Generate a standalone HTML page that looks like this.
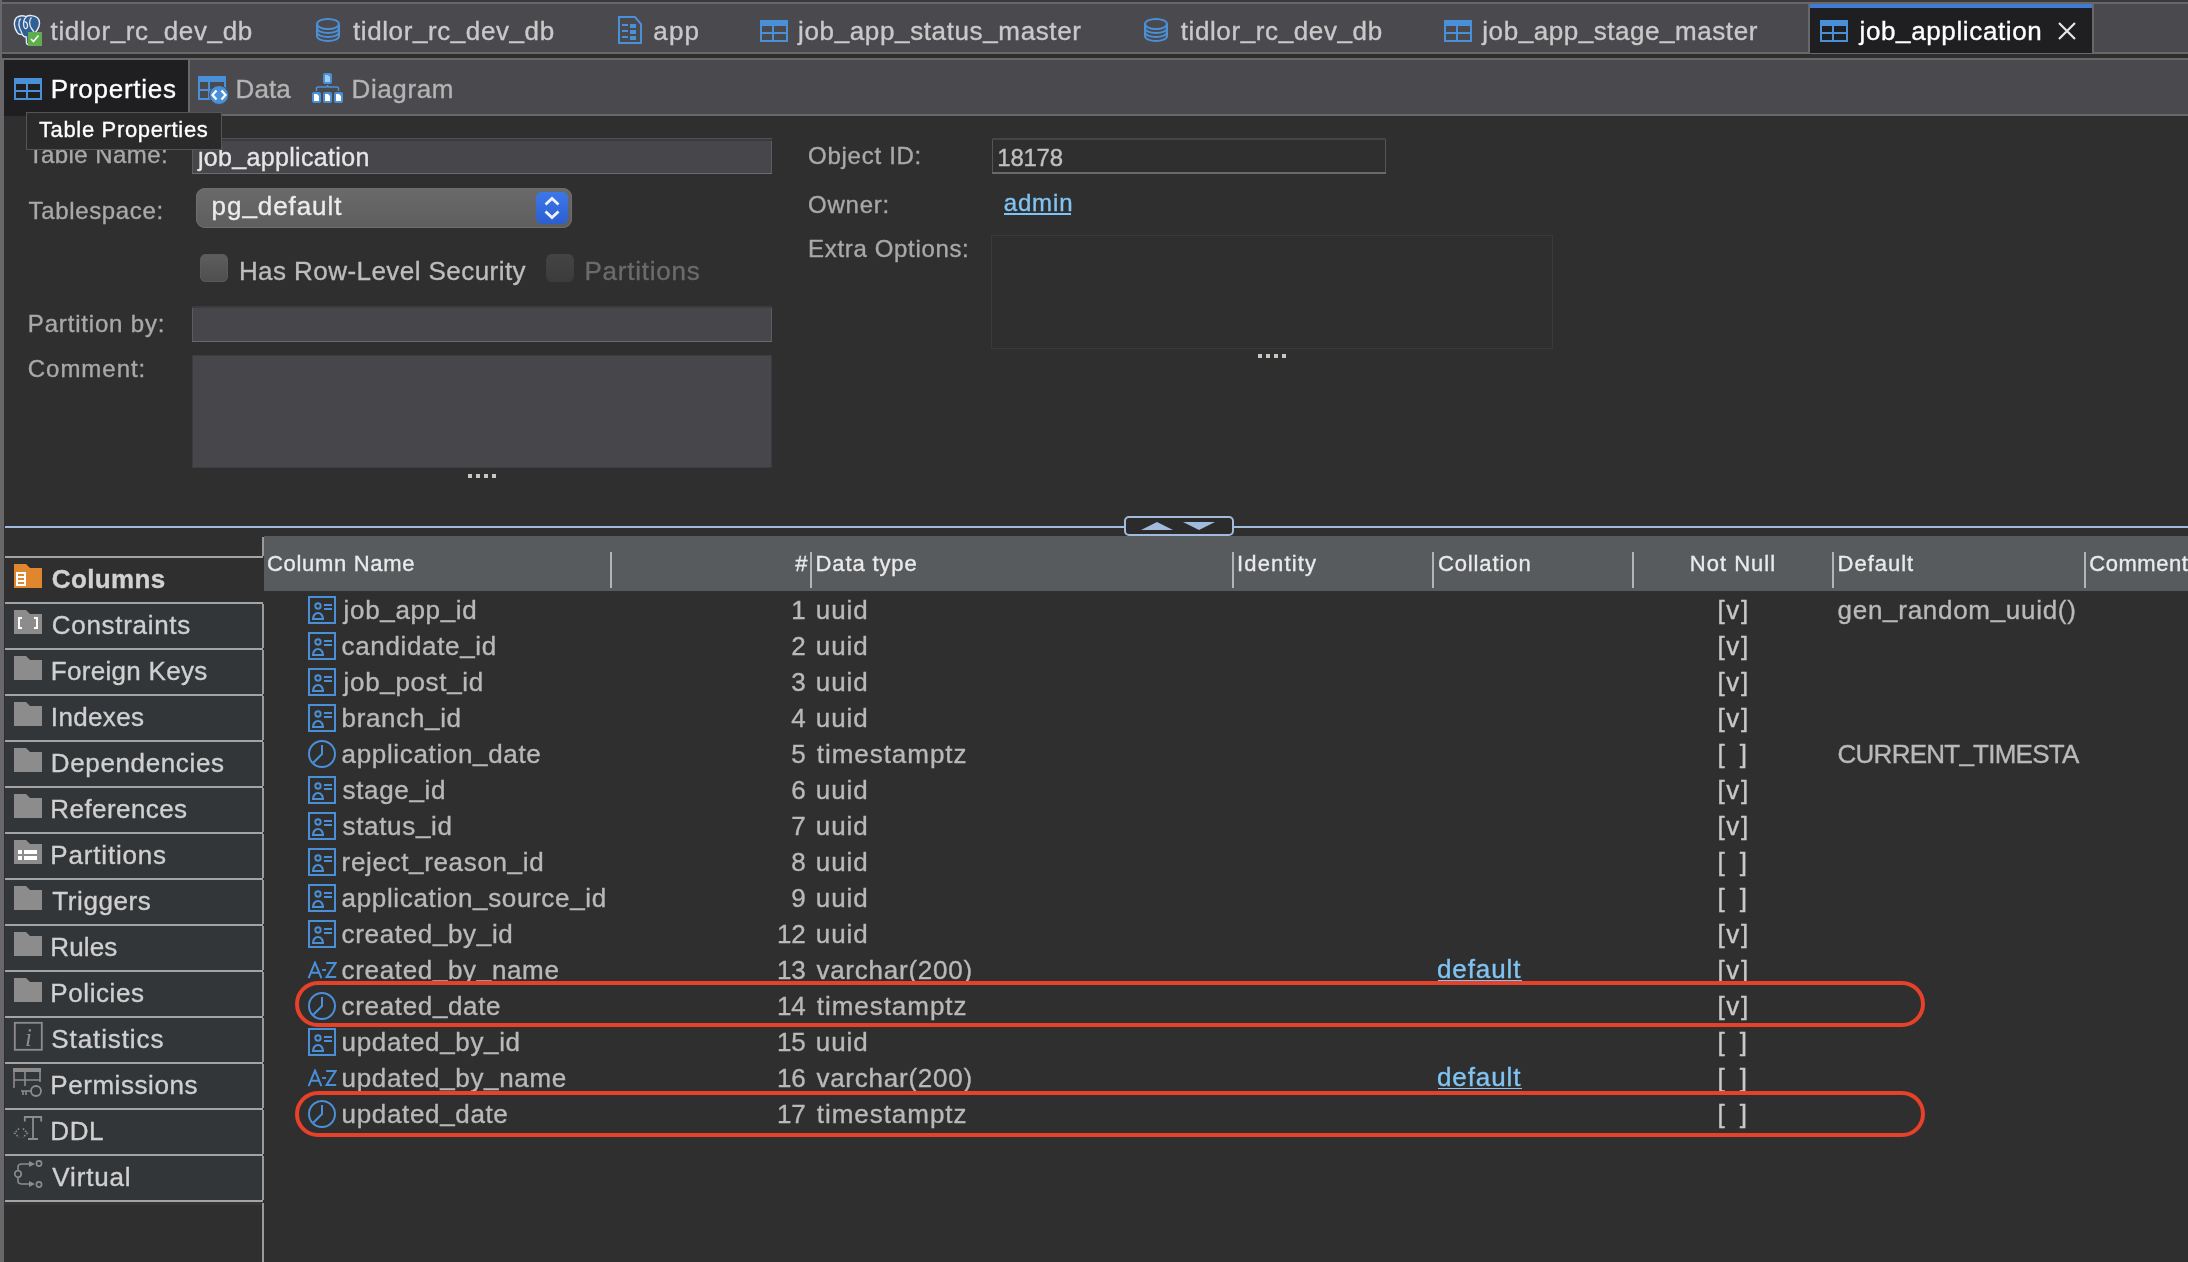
<!DOCTYPE html>
<html><head><meta charset="utf-8"><style>
html,body{margin:0;padding:0;}
body{width:2188px;height:1262px;overflow:hidden;position:relative;background:#2f2f2f;font-family:"Liberation Sans", sans-serif;}
#root{position:absolute;left:0;top:0;width:2188px;height:1262px;will-change:transform;}
#root div{-webkit-text-stroke:0.35px currentColor;}
</style></head><body>
<div id="root"><div style="position:absolute;left:0;top:0;width:2188px;height:2px;background:#3a3a3c"></div>
<div style="position:absolute;left:0px;top:2px;width:2188px;height:2px;background:#68686a"></div>
<div style="position:absolute;left:0px;top:4px;width:2188px;height:48px;background:#4a494d"></div>
<div style="position:absolute;left:0px;top:52px;width:2188px;height:2px;background:#68686a"></div>
<div style="position:absolute;left:0px;top:54px;width:2188px;height:4px;background:#2e2e2e"></div>
<div style="position:absolute;left:0px;top:58px;width:2188px;height:2px;background:#68686a"></div>
<div style="position:absolute;left:0px;top:60px;width:2188px;height:54px;background:#4a494d"></div>
<div style="position:absolute;left:0px;top:114px;width:2188px;height:2px;background:#68686a"></div>
<div style="position:absolute;left:0px;top:0px;width:2px;height:116px;background:#68686a"></div>
<div style="position:absolute;left:0px;top:116px;width:4px;height:1146px;background:#68686a"></div>
<div style="position:absolute;left:0px;top:60px;width:4px;height:56px;background:#68686a"></div>
<svg style="position:absolute;left:12px;top:14px" width="32" height="32" viewBox="0 0 32 32">
<path d="M4.5 3.5C8 1.2 11.5 1.6 14 2.6C17 1 22.5 1.2 25.5 3.8C28.5 6.8 27.8 12 25.5 15.5L23 19L18 24L17.5 29C16.8 31 15 31 14.5 29L14.2 23C12.5 23 10.8 22 10 20C8 21 6 20 5 18C2 13.5 1.2 7 4.5 3.5Z" fill="#2f5f93" stroke="#e8e8f0" stroke-width="1.4"/>
<path d="M8.5 4.5C6 8 7 14 10 19M14.5 3C11.5 4.5 11 9.5 12 13C13 15.5 15.5 15 15.5 12C15.5 9 14 7.5 12.5 8M19.5 3.5C17 5.5 17 11 19.5 14.5L22 18" fill="none" stroke="#e8e8f0" stroke-width="1.3"/>
<rect x="16" y="18" width="14" height="14" fill="#60ad50"/>
<path d="M19 25L21.5 27.5L26.5 21.5" fill="none" stroke="#f4fff0" stroke-width="1.6"/></svg>
<div style="position:absolute;top:17.99px;font-size:26px;line-height:26px;color:#c9c9c9;letter-spacing:0.6218359374999997px;font-weight:400;white-space:pre;left:50.60px;">tidlor<span style="position:relative;top:-2px">_</span>rc<span style="position:relative;top:-2px">_</span>dev<span style="position:relative;top:-2px">_</span>db</div>
<svg style="position:absolute;left:316px;top:18px" width="24" height="24" viewBox="0 0 24 24"><g fill="none" stroke="#4a90d9" stroke-width="2"><ellipse cx="12" cy="6" rx="11" ry="5"/><path d="M1 6V18C1 21 6 23 12 23S23 21 23 18V6"/><path d="M1 10C1 13 6 15 12 15S23 13 23 10"/><path d="M1 14C1 17 6 19 12 19S23 17 23 14"/></g></svg>
<div style="position:absolute;top:17.99px;font-size:26px;line-height:26px;color:#c9c9c9;letter-spacing:0.5885026041666682px;font-weight:400;white-space:pre;left:353.00px;">tidlor<span style="position:relative;top:-2px">_</span>rc<span style="position:relative;top:-2px">_</span>dev<span style="position:relative;top:-2px">_</span>db</div>
<svg style="position:absolute;left:618px;top:16px" width="24" height="28" viewBox="0 0 24 28"><path fill="none" stroke="#4a90d9" stroke-width="2" d="M1 1H17L23 8V27H1Z"/><g fill="#4a90d9"><rect x="4" y="8" width="6" height="2"/><rect x="4" y="14" width="6" height="2"/><rect x="4" y="20" width="6" height="2"/><rect x="12" y="8" width="6" height="4"/><rect x="12" y="14" width="6" height="4"/><rect x="12" y="20" width="6" height="4"/></g></svg>
<div style="position:absolute;top:17.99px;font-size:26px;line-height:26px;color:#c9c9c9;letter-spacing:1.190039062500034px;font-weight:400;white-space:pre;left:653.30px;">app</div>
<svg style="position:absolute;left:760px;top:20px" width="28" height="22" viewBox="0 0 28 22"><path fill="#4a90d9" d="M0 0H28V22H0Z M2 6V12H12V6Z M14 6V12H26V6Z M2 14V20H12V14Z M14 14V20H26V14Z" fill-rule="evenodd"/></svg>
<div style="position:absolute;top:17.99px;font-size:26px;line-height:26px;color:#c9c9c9;letter-spacing:0.6237500000000011px;font-weight:400;white-space:pre;left:798.10px;">job<span style="position:relative;top:-2px">_</span>app<span style="position:relative;top:-2px">_</span>status<span style="position:relative;top:-2px">_</span>master</div>
<svg style="position:absolute;left:1144px;top:18px" width="24" height="24" viewBox="0 0 24 24"><g fill="none" stroke="#4a90d9" stroke-width="2"><ellipse cx="12" cy="6" rx="11" ry="5"/><path d="M1 6V18C1 21 6 23 12 23S23 21 23 18V6"/><path d="M1 10C1 13 6 15 12 15S23 13 23 10"/><path d="M1 14C1 17 6 19 12 19S23 17 23 14"/></g></svg>
<div style="position:absolute;top:17.99px;font-size:26px;line-height:26px;color:#c9c9c9;letter-spacing:0.6085026041666576px;font-weight:400;white-space:pre;left:1180.70px;">tidlor<span style="position:relative;top:-2px">_</span>rc<span style="position:relative;top:-2px">_</span>dev<span style="position:relative;top:-2px">_</span>db</div>
<svg style="position:absolute;left:1444px;top:20px" width="28" height="22" viewBox="0 0 28 22"><path fill="#4a90d9" d="M0 0H28V22H0Z M2 6V12H12V6Z M14 6V12H26V6Z M2 14V20H12V14Z M14 14V20H26V14Z" fill-rule="evenodd"/></svg>
<div style="position:absolute;top:17.99px;font-size:26px;line-height:26px;color:#c9c9c9;letter-spacing:0.5494037828947345px;font-weight:400;white-space:pre;left:1482.30px;">job<span style="position:relative;top:-2px">_</span>app<span style="position:relative;top:-2px">_</span>stage<span style="position:relative;top:-2px">_</span>master</div>
<div style="position:absolute;left:1808px;top:4px;width:2px;height:49px;background:#68686a"></div>
<div style="position:absolute;left:2092px;top:4px;width:2px;height:49px;background:#68686a"></div>
<div style="position:absolute;left:1810px;top:4px;width:282px;height:4px;background:#3f7ad6"></div>
<div style="position:absolute;left:1810px;top:8px;width:282px;height:45px;background:#1f1f22"></div>
<svg style="position:absolute;left:1820px;top:20px" width="28" height="22" viewBox="0 0 28 22"><path fill="#4a90d9" d="M0 0H28V22H0Z M2 6V12H12V6Z M14 6V12H26V6Z M2 14V20H12V14Z M14 14V20H26V14Z" fill-rule="evenodd"/></svg>
<div style="position:absolute;top:17.99px;font-size:26px;line-height:26px;color:#ffffff;letter-spacing:0.6279436383928539px;font-weight:400;white-space:pre;left:1859.50px;">job<span style="position:relative;top:-2px">_</span>application</div>
<svg style="position:absolute;left:2058px;top:22px" width="18" height="18" viewBox="0 0 18 18"><path d="M1 1L17 17M17 1L1 17" stroke="#e8e8e8" stroke-width="2.2"/></svg>
<div style="position:absolute;left:4px;top:60px;width:184px;height:56px;background:#1f1f21"></div>
<div style="position:absolute;left:188px;top:60px;width:2px;height:54px;background:#68686a"></div>
<svg style="position:absolute;left:14px;top:78px" width="28" height="22" viewBox="0 0 28 22"><path fill="#4a90d9" d="M0 0H28V22H0Z M2 6V12H12V6Z M14 6V12H26V6Z M2 14V20H12V14Z M14 14V20H26V14Z" fill-rule="evenodd"/></svg>
<div style="position:absolute;top:75.99px;font-size:26px;line-height:26px;color:#ffffff;letter-spacing:0.7446614583333336px;font-weight:400;white-space:pre;left:50.80px;">Properties</div>
<svg style="position:absolute;left:198px;top:76px" width="32" height="32" viewBox="0 0 32 32"><path fill="#4a90d9" fill-rule="evenodd" d="M0 0H28V24H0Z M2 6V13H10V6Z M12 6V13H26V6Z M2 15V22H10V15Z M12 15V22H26V15Z"/><circle cx="21" cy="19" r="9.5" fill="#4a90d9" stroke="#4a494d" stroke-width="1"/><path d="M18.5 14.5L14.5 19L18.5 23.5M23.5 14.5L27.5 19L23.5 23.5" fill="none" stroke="#fff" stroke-width="2.2"/></svg>
<div style="position:absolute;top:75.99px;font-size:26px;line-height:26px;color:#b4b4b4;letter-spacing:0.08001302083333901px;font-weight:400;white-space:pre;left:235.60px;">Data</div>
<svg style="position:absolute;left:311px;top:72px" width="34" height="32" viewBox="0 0 34 32"><g fill="#4a90d9"><rect x="12" y="1" width="9" height="11" rx="2"/><rect x="1" y="20" width="9" height="11" rx="2"/><rect x="12" y="20" width="9" height="11" rx="2"/><rect x="23" y="20" width="9" height="11" rx="2"/></g><g fill="#9ecdf0"><path d="M14 3H17L19 5V10H14Z"/></g><g fill="#fff"><path d="M3 22H6L8 24V29H3Z"/><path d="M14 22H17L19 24V29H14Z"/><path d="M25 22H28L30 24V29H25Z"/></g><path d="M5.5 19V16Q5.5 15 7 15H15Q16.5 15 16.5 13Q16.5 15 18 15H26Q27.5 15 27.5 16V19" fill="none" stroke="#4a90d9" stroke-width="1.5"/></svg>
<div style="position:absolute;top:75.99px;font-size:26px;line-height:26px;color:#b4b4b4;letter-spacing:0.5848632812499943px;font-weight:400;white-space:pre;left:351.60px;">Diagram</div>
<div style="position:absolute;top:143.48px;font-size:24px;line-height:24px;color:#a9a9a9;letter-spacing:0.4337500000000006px;font-weight:400;white-space:pre;left:28.60px;">Table Name:</div>
<div style="position:absolute;left:192px;top:138px;width:580px;height:36px;background:#47474b;box-shadow:inset 0 3px 0 #3a3a3d, inset 0 -1px 0 #6c6c6e, inset 1px 0 0 #5c5c5e, inset -1px 0 0 #5c5c5e"></div>
<div style="position:absolute;left:192px;top:138px;width:580px;height:1px;background:#505052"></div>
<div style="position:absolute;top:144.64px;font-size:25px;line-height:25px;color:#e6e6e6;letter-spacing:0.3290666852678551px;font-weight:400;white-space:pre;left:197.90px;">job<span style="position:relative;top:-2px">_</span>application</div>
<div style="position:absolute;left:26px;top:111.5px;width:196px;height:38.5px;background:#2a2a2a;border:1px solid #555;box-sizing:border-box"></div>
<div style="position:absolute;top:119.18px;font-size:22px;line-height:22px;color:#ffffff;letter-spacing:0.6617578125000004px;font-weight:400;white-space:pre;left:38.90px;">Table Properties</div>
<div style="position:absolute;top:199.48px;font-size:24px;line-height:24px;color:#a9a9a9;letter-spacing:0.6382031250000011px;font-weight:400;white-space:pre;left:28.60px;">Tablespace:</div>
<div style="position:absolute;left:196px;top:188px;width:376px;height:40px;background:linear-gradient(#6a6a6a,#5e5e5e);border-radius:9px;box-shadow:inset 0 0 0 1px #6e6e6e"></div>
<div style="position:absolute;top:193.39px;font-size:26px;line-height:26px;color:#ececec;letter-spacing:0.9311414930555549px;font-weight:400;white-space:pre;left:211.60px;">pg<span style="position:relative;top:-2px">_</span>default</div>
<div style="position:absolute;left:536px;top:192px;width:32px;height:32px;background:linear-gradient(#3c78ea,#2b5fd0);border-radius:6px"></div>
<svg style="position:absolute;left:536px;top:192px" width="32" height="32" viewBox="0 0 32 32"><path d="M9.5 12.5L16 6.5L22.5 12.5M9.5 19.5L16 25.5L22.5 19.5" fill="none" stroke="#f2f2f2" stroke-width="2.8"/></svg>
<div style="position:absolute;left:200px;top:254px;width:28px;height:28px;background:linear-gradient(#5e5e5e,#4e4e4e);border-radius:6px;box-shadow:inset 0 0 0 1px #5a5a5a"></div>
<div style="position:absolute;top:258.29px;font-size:26px;line-height:26px;color:#bdbdbd;letter-spacing:0.4413969494047641px;font-weight:400;white-space:pre;left:238.90px;">Has Row-Level Security</div>
<div style="position:absolute;left:546px;top:254px;width:28px;height:28px;background:linear-gradient(#444,#3c3c3c);border-radius:6px"></div>
<div style="position:absolute;top:258.29px;font-size:26px;line-height:26px;color:#6b6b6b;letter-spacing:0.7689019097222298px;font-weight:400;white-space:pre;left:584.40px;">Partitions</div>
<div style="position:absolute;top:311.78px;font-size:24px;line-height:24px;color:#a9a9a9;letter-spacing:0.8284505208333334px;font-weight:400;white-space:pre;left:27.80px;">Partition by:</div>
<div style="position:absolute;left:192px;top:306px;width:580px;height:35.5px;background:#47474b;box-shadow:inset 0 2px 0 #3c3c3e, inset 0 -1px 0 #6a6a6c, inset 1px 0 0 #5c5c5e, inset -1px 0 0 #5c5c5e"></div>
<div style="position:absolute;top:357.48px;font-size:24px;line-height:24px;color:#a9a9a9;letter-spacing:0.967522321428571px;font-weight:400;white-space:pre;left:27.80px;">Comment:</div>
<div style="position:absolute;left:192px;top:354.5px;width:580px;height:113px;background:#47464b;box-shadow:inset 0 0 0 1px #3c3c3e"></div>
<div style="position:absolute;left:468px;top:474px;width:3.5px;height:3.5px;background:#c8c8c0"></div>
<div style="position:absolute;left:476px;top:474px;width:3.5px;height:3.5px;background:#c8c8c0"></div>
<div style="position:absolute;left:484px;top:474px;width:3.5px;height:3.5px;background:#c8c8c0"></div>
<div style="position:absolute;left:492px;top:474px;width:3.5px;height:3.5px;background:#c8c8c0"></div>
<div style="position:absolute;top:143.68px;font-size:24px;line-height:24px;color:#a9a9a9;letter-spacing:0.71875px;font-weight:400;white-space:pre;left:808.10px;">Object ID:</div>
<div style="position:absolute;left:992px;top:138px;width:394px;height:36px;box-shadow:inset 0 2px 0 #454545, inset 0 -2px 0 #6a6a6a, inset 1px 0 0 #555, inset -1px 0 0 #555"></div>
<div style="position:absolute;top:145.78px;font-size:24px;line-height:24px;color:#c0c0c0;letter-spacing:-0.24765624999997726px;font-weight:400;white-space:pre;left:997.30px;">18178</div>
<div style="position:absolute;top:193.28px;font-size:24px;line-height:24px;color:#a9a9a9;letter-spacing:0.7424999999999955px;font-weight:400;white-space:pre;left:808.10px;">Owner:</div>
<div style="position:absolute;top:191.18px;font-size:24px;line-height:24px;color:#80c4f4;letter-spacing:0.8701171875px;font-weight:400;white-space:pre;left:1003.70px;">admin</div>
<div style="position:absolute;left:1004px;top:213.4px;width:67.2px;height:1.8px;background:#80c4f4"></div>
<div style="position:absolute;top:237.18px;font-size:24px;line-height:24px;color:#a9a9a9;letter-spacing:0.6619591346153846px;font-weight:400;white-space:pre;left:808.10px;">Extra Options:</div>
<div style="position:absolute;left:991px;top:234.6px;width:562px;height:114.4px;box-shadow:inset 0 0 0 1px #3a3a3a"></div>
<div style="position:absolute;left:1258px;top:354px;width:3.5px;height:3.5px;background:#c8c8c0"></div>
<div style="position:absolute;left:1266px;top:354px;width:3.5px;height:3.5px;background:#c8c8c0"></div>
<div style="position:absolute;left:1274px;top:354px;width:3.5px;height:3.5px;background:#c8c8c0"></div>
<div style="position:absolute;left:1282px;top:354px;width:3.5px;height:3.5px;background:#c8c8c0"></div>
<div style="position:absolute;left:5px;top:526px;width:2183px;height:2px;background:#a2badb"></div>
<div style="position:absolute;left:1124px;top:516px;width:110px;height:20px;background:#2b2b2b;border:2px solid #a2badb;border-radius:5px;box-sizing:border-box"></div>
<svg style="position:absolute;left:1124px;top:516px" width="110" height="20" viewBox="0 0 110 20"><path d="M17 14L33 6L49 14Z M59 6H91L75 14Z" fill="#a2badb"/></svg>
<div style="position:absolute;left:5px;top:556px;width:258px;height:2px;background:#a4a4a4"></div>
<div style="position:absolute;top:565.59px;font-size:26px;line-height:26px;color:#d2d2d2;letter-spacing:0.3560546874999986px;font-weight:700;white-space:pre;left:51.80px;">Columns</div>
<div style="position:absolute;left:5px;top:602px;width:258px;height:2px;background:#a4a4a4"></div>
<div style="position:absolute;left:5px;top:604px;width:257px;height:44px;background:#333638"></div>
<div style="position:absolute;left:262px;top:604px;width:2px;height:44px;background:#9a9a9a"></div>
<div style="position:absolute;top:611.59px;font-size:26px;line-height:26px;color:#d0d0d0;letter-spacing:0.7001953125px;font-weight:400;white-space:pre;left:51.80px;">Constraints</div>
<div style="position:absolute;left:5px;top:648px;width:258px;height:2px;background:#a4a4a4"></div>
<div style="position:absolute;left:5px;top:650px;width:257px;height:44px;background:#333638"></div>
<div style="position:absolute;left:262px;top:650px;width:2px;height:44px;background:#9a9a9a"></div>
<div style="position:absolute;top:657.59px;font-size:26px;line-height:26px;color:#d0d0d0;letter-spacing:0.3016690340909091px;font-weight:400;white-space:pre;left:50.80px;">Foreign Keys</div>
<div style="position:absolute;left:5px;top:694px;width:258px;height:2px;background:#a4a4a4"></div>
<div style="position:absolute;left:5px;top:696px;width:257px;height:44px;background:#333638"></div>
<div style="position:absolute;left:262px;top:696px;width:2px;height:44px;background:#9a9a9a"></div>
<div style="position:absolute;top:703.59px;font-size:26px;line-height:26px;color:#d0d0d0;letter-spacing:0.3560872395833338px;font-weight:400;white-space:pre;left:50.80px;">Indexes</div>
<div style="position:absolute;left:5px;top:740px;width:258px;height:2px;background:#a4a4a4"></div>
<div style="position:absolute;left:5px;top:742px;width:257px;height:44px;background:#333638"></div>
<div style="position:absolute;left:262px;top:742px;width:2px;height:44px;background:#9a9a9a"></div>
<div style="position:absolute;top:749.59px;font-size:26px;line-height:26px;color:#d0d0d0;letter-spacing:0.6334161931818172px;font-weight:400;white-space:pre;left:50.80px;">Dependencies</div>
<div style="position:absolute;left:5px;top:786px;width:258px;height:2px;background:#a4a4a4"></div>
<div style="position:absolute;left:5px;top:788px;width:257px;height:44px;background:#333638"></div>
<div style="position:absolute;left:262px;top:788px;width:2px;height:44px;background:#9a9a9a"></div>
<div style="position:absolute;top:795.59px;font-size:26px;line-height:26px;color:#d0d0d0;letter-spacing:0.4268880208333346px;font-weight:400;white-space:pre;left:50.30px;">References</div>
<div style="position:absolute;left:5px;top:832px;width:258px;height:2px;background:#a4a4a4"></div>
<div style="position:absolute;left:5px;top:834px;width:257px;height:44px;background:#333638"></div>
<div style="position:absolute;left:262px;top:834px;width:2px;height:44px;background:#9a9a9a"></div>
<div style="position:absolute;top:841.59px;font-size:26px;line-height:26px;color:#d0d0d0;letter-spacing:0.8244574652777774px;font-weight:400;white-space:pre;left:50.30px;">Partitions</div>
<div style="position:absolute;left:5px;top:878px;width:258px;height:2px;background:#a4a4a4"></div>
<div style="position:absolute;left:5px;top:880px;width:257px;height:44px;background:#333638"></div>
<div style="position:absolute;left:262px;top:880px;width:2px;height:44px;background:#9a9a9a"></div>
<div style="position:absolute;top:887.59px;font-size:26px;line-height:26px;color:#d0d0d0;letter-spacing:0.5871930803571449px;font-weight:400;white-space:pre;left:52.30px;">Triggers</div>
<div style="position:absolute;left:5px;top:924px;width:258px;height:2px;background:#a4a4a4"></div>
<div style="position:absolute;left:5px;top:926px;width:257px;height:44px;background:#333638"></div>
<div style="position:absolute;left:262px;top:926px;width:2px;height:44px;background:#9a9a9a"></div>
<div style="position:absolute;top:933.59px;font-size:26px;line-height:26px;color:#d0d0d0;letter-spacing:0.10683593750000142px;font-weight:400;white-space:pre;left:50.30px;">Rules</div>
<div style="position:absolute;left:5px;top:970px;width:258px;height:2px;background:#a4a4a4"></div>
<div style="position:absolute;left:5px;top:972px;width:257px;height:44px;background:#333638"></div>
<div style="position:absolute;left:262px;top:972px;width:2px;height:44px;background:#9a9a9a"></div>
<div style="position:absolute;top:979.59px;font-size:26px;line-height:26px;color:#d0d0d0;letter-spacing:0.5870256696428575px;font-weight:400;white-space:pre;left:50.30px;">Policies</div>
<div style="position:absolute;left:5px;top:1016px;width:258px;height:2px;background:#a4a4a4"></div>
<div style="position:absolute;left:5px;top:1018px;width:257px;height:44px;background:#333638"></div>
<div style="position:absolute;left:262px;top:1018px;width:2px;height:44px;background:#9a9a9a"></div>
<div style="position:absolute;top:1025.59px;font-size:26px;line-height:26px;color:#d0d0d0;letter-spacing:0.8971788194444454px;font-weight:400;white-space:pre;left:51.30px;">Statistics</div>
<div style="position:absolute;left:5px;top:1062px;width:258px;height:2px;background:#a4a4a4"></div>
<div style="position:absolute;left:5px;top:1064px;width:257px;height:44px;background:#333638"></div>
<div style="position:absolute;left:262px;top:1064px;width:2px;height:44px;background:#9a9a9a"></div>
<div style="position:absolute;top:1071.59px;font-size:26px;line-height:26px;color:#d0d0d0;letter-spacing:0.5509179687500023px;font-weight:400;white-space:pre;left:50.30px;">Permissions</div>
<div style="position:absolute;left:5px;top:1108px;width:258px;height:2px;background:#a4a4a4"></div>
<div style="position:absolute;left:5px;top:1110px;width:257px;height:44px;background:#333638"></div>
<div style="position:absolute;left:262px;top:1110px;width:2px;height:44px;background:#9a9a9a"></div>
<div style="position:absolute;top:1117.59px;font-size:26px;line-height:26px;color:#d0d0d0;letter-spacing:0.6236328124999986px;font-weight:400;white-space:pre;left:50.30px;">DDL</div>
<div style="position:absolute;left:5px;top:1154px;width:258px;height:2px;background:#a4a4a4"></div>
<div style="position:absolute;left:5px;top:1156px;width:257px;height:44px;background:#333638"></div>
<div style="position:absolute;left:262px;top:1156px;width:2px;height:44px;background:#9a9a9a"></div>
<div style="position:absolute;top:1163.59px;font-size:26px;line-height:26px;color:#d0d0d0;letter-spacing:0.8416341145833357px;font-weight:400;white-space:pre;left:52.30px;">Virtual</div>
<div style="position:absolute;left:5px;top:1200px;width:258px;height:2px;background:#a4a4a4"></div>
<div style="position:absolute;left:5px;top:1202px;width:257px;height:3px;background:#333638"></div>
<div style="position:absolute;left:262px;top:537px;width:2px;height:19px;background:#9a9a9a"></div>
<div style="position:absolute;left:262px;top:1203px;width:2px;height:59px;background:#9a9a9a"></div>
<svg style="position:absolute;left:14px;top:564px" width="28" height="24" viewBox="0 0 28 24"><path fill="#e0862e" d="M0 0H12L16 4H28V24H0Z"/><rect x="2" y="8" width="10" height="14" fill="#fff"/><g fill="#e0862e"><rect x="4" y="10" width="6" height="2"/><rect x="4" y="14" width="6" height="2"/><rect x="4" y="18" width="6" height="2"/></g></svg>
<svg style="position:absolute;left:14px;top:610px" width="28" height="24" viewBox="0 0 28 24"><path fill="#8c8c8c" d="M0 0H12L16 4H28V24H0Z"/><path d="M8 8H5V18H8M20 8H23V18H20" fill="none" stroke="#fff" stroke-width="2"/></svg>
<svg style="position:absolute;left:14px;top:656px" width="28" height="24" viewBox="0 0 28 24"><path fill="#8c8c8c" d="M0 0H12L16 4H28V24H0Z"/></svg>
<svg style="position:absolute;left:14px;top:702px" width="28" height="24" viewBox="0 0 28 24"><path fill="#8c8c8c" d="M0 0H12L16 4H28V24H0Z"/></svg>
<svg style="position:absolute;left:14px;top:748px" width="28" height="24" viewBox="0 0 28 24"><path fill="#8c8c8c" d="M0 0H12L16 4H28V24H0Z"/></svg>
<svg style="position:absolute;left:14px;top:794px" width="28" height="24" viewBox="0 0 28 24"><path fill="#8c8c8c" d="M0 0H12L16 4H28V24H0Z"/></svg>
<svg style="position:absolute;left:14px;top:886px" width="28" height="24" viewBox="0 0 28 24"><path fill="#8c8c8c" d="M0 0H12L16 4H28V24H0Z"/></svg>
<svg style="position:absolute;left:14px;top:932px" width="28" height="24" viewBox="0 0 28 24"><path fill="#8c8c8c" d="M0 0H12L16 4H28V24H0Z"/></svg>
<svg style="position:absolute;left:14px;top:978px" width="28" height="24" viewBox="0 0 28 24"><path fill="#8c8c8c" d="M0 0H12L16 4H28V24H0Z"/></svg>
<svg style="position:absolute;left:14px;top:840px" width="28" height="24" viewBox="0 0 28 24"><path fill="#8c8c8c" d="M0 0H12L16 4H28V24H0Z"/><g fill="#fff"><rect x="4" y="10" width="4" height="4"/><rect x="10" y="10" width="13" height="4"/><rect x="4" y="16" width="4" height="4"/><rect x="10" y="16" width="13" height="4"/></g></svg>
<svg style="position:absolute;left:13px;top:1021px" width="30" height="30" viewBox="0 0 30 30"><rect x="1.8" y="1.8" width="27" height="27" fill="none" stroke="#8c8c8c" stroke-width="1.8"/><text x="15.5" y="24.5" font-family="Liberation Serif" font-style="italic" font-size="25" fill="#8c8c8c" text-anchor="middle">i</text></svg>
<svg style="position:absolute;left:13px;top:1068px" width="30" height="30" viewBox="0 0 30 30"><path fill="#8c8c8c" d="M0 0H28V4H0Z"/><path d="M1 4V20M1 12H27M12 4V18M27 4V14" fill="none" stroke="#8c8c8c" stroke-width="1.6"/><circle cx="23" cy="23" r="5" fill="none" stroke="#8c8c8c" stroke-width="1.8"/><path d="M8 23H18M10 23V27M13 23V27" fill="none" stroke="#8c8c8c" stroke-width="1.6"/></svg>
<svg style="position:absolute;left:13px;top:1114px" width="30" height="30" viewBox="0 0 30 30"><path d="M11 3H29M11.8 2.2V7.5M28.2 2.2V7.5M20 3V25M15 25H25" fill="none" stroke="#8c8c8c" stroke-width="1.8"/><path d="M6 14.5L1.5 19L6 23.5M10 14.5L14.5 19L10 23.5" fill="none" stroke="#8c8c8c" stroke-width="1.6" stroke-dasharray="1.6 1.5"/></svg>
<svg style="position:absolute;left:13px;top:1160px" width="30" height="30" viewBox="0 0 30 30"><circle cx="5" cy="14" r="3.2" fill="none" stroke="#8c8c8c" stroke-width="1.6"/><path d="M5 11V7Q5 4 9 4H18M5 17V21Q5 24 9 24H18" fill="none" stroke="#8c8c8c" stroke-width="1.6"/><path d="M16 1L22 4L16 7Z M16 21L22 24L16 27Z" fill="#8c8c8c"/><circle cx="26" cy="3.5" r="2.6" fill="none" stroke="#8c8c8c" stroke-width="1.6"/><circle cx="26" cy="24.5" r="2.6" fill="none" stroke="#8c8c8c" stroke-width="1.6"/></svg>
<div style="position:absolute;left:264px;top:536px;width:1924px;height:55px;background:#585b5e"></div>
<div style="position:absolute;left:610px;top:552px;width:2px;height:36px;background:#b4b4b4"></div>
<div style="position:absolute;left:810px;top:552px;width:2px;height:36px;background:#b4b4b4"></div>
<div style="position:absolute;left:1232px;top:552px;width:2px;height:36px;background:#b4b4b4"></div>
<div style="position:absolute;left:1432px;top:552px;width:2px;height:36px;background:#b4b4b4"></div>
<div style="position:absolute;left:1632px;top:552px;width:2px;height:36px;background:#b4b4b4"></div>
<div style="position:absolute;left:1832px;top:552px;width:2px;height:36px;background:#b4b4b4"></div>
<div style="position:absolute;left:2084px;top:552px;width:2px;height:36px;background:#b4b4b4"></div>
<div style="position:absolute;top:553.48px;font-size:22px;line-height:22px;color:#eaeaea;letter-spacing:0.6830859374999989px;font-weight:400;white-space:pre;left:267.00px;">Column Name</div>
<div style="position:absolute;top:553.48px;font-size:22px;line-height:22px;color:#eaeaea;letter-spacing:0px;font-weight:400;white-space:pre;right:1380.50px;">#</div>
<div style="position:absolute;top:553.48px;font-size:22px;line-height:22px;color:#eaeaea;letter-spacing:0.8586669921874943px;font-weight:400;white-space:pre;left:815.60px;">Data type</div>
<div style="position:absolute;top:553.48px;font-size:22px;line-height:22px;color:#eaeaea;letter-spacing:1.1527622767857142px;font-weight:400;white-space:pre;left:1237.00px;">Identity</div>
<div style="position:absolute;top:553.48px;font-size:22px;line-height:22px;color:#eaeaea;letter-spacing:0.891357421875px;font-weight:400;white-space:pre;left:1437.90px;">Collation</div>
<div style="position:absolute;top:553.48px;font-size:22px;line-height:22px;color:#eaeaea;letter-spacing:1.0059430803571558px;font-weight:400;white-space:pre;left:1689.80px;">Not Null</div>
<div style="position:absolute;top:553.48px;font-size:22px;line-height:22px;color:#eaeaea;letter-spacing:0.984375px;font-weight:400;white-space:pre;left:1837.60px;">Default</div>
<div style="position:absolute;top:553.48px;font-size:22px;line-height:22px;color:#eaeaea;letter-spacing:0.55px;font-weight:400;white-space:pre;left:2089.20px;">Comment</div>
<svg style="position:absolute;left:308px;top:596px" width="28" height="28" viewBox="0 0 28 28"><g fill="none" stroke="#4a90d9" stroke-width="2"><rect x="1" y="1" width="26" height="26"/><circle cx="10" cy="10" r="2.7" stroke-width="1.9"/><path d="M5 23A5 6 0 0 1 15 23Z"/></g><g fill="#4a90d9"><rect x="16" y="8" width="8" height="2"/><rect x="16" y="12" width="8" height="2"/></g></svg>
<div style="position:absolute;top:597.09px;font-size:26px;line-height:26px;color:#b9b9b9;letter-spacing:0.65px;font-weight:400;white-space:pre;left:343.60px;">job<span style="position:relative;top:-2px">_</span>app<span style="position:relative;top:-2px">_</span>id</div>
<div style="position:absolute;top:597.09px;font-size:26px;line-height:26px;color:#b9b9b9;letter-spacing:0px;font-weight:400;white-space:pre;right:1382.20px;">1</div>
<div style="position:absolute;top:597.09px;font-size:26px;line-height:26px;color:#b9b9b9;letter-spacing:0.9345703125px;font-weight:400;white-space:pre;left:815.80px;">uuid</div>
<div style="position:absolute;top:597.09px;font-size:26px;line-height:26px;color:#c8c8c8;letter-spacing:1.6881835937499545px;font-weight:400;white-space:pre;left:1717.40px;">[v]</div>
<div style="position:absolute;top:597.09px;font-size:26px;line-height:26px;color:#b9b9b9;letter-spacing:0.7080932617187443px;font-weight:400;white-space:pre;left:1837.60px;">gen<span style="position:relative;top:-2px">_</span>random<span style="position:relative;top:-2px">_</span>uuid()</div>
<svg style="position:absolute;left:308px;top:632px" width="28" height="28" viewBox="0 0 28 28"><g fill="none" stroke="#4a90d9" stroke-width="2"><rect x="1" y="1" width="26" height="26"/><circle cx="10" cy="10" r="2.7" stroke-width="1.9"/><path d="M5 23A5 6 0 0 1 15 23Z"/></g><g fill="#4a90d9"><rect x="16" y="8" width="8" height="2"/><rect x="16" y="12" width="8" height="2"/></g></svg>
<div style="position:absolute;top:633.09px;font-size:26px;line-height:26px;color:#b9b9b9;letter-spacing:0.65px;font-weight:400;white-space:pre;left:341.60px;">candidate<span style="position:relative;top:-2px">_</span>id</div>
<div style="position:absolute;top:633.09px;font-size:26px;line-height:26px;color:#b9b9b9;letter-spacing:0px;font-weight:400;white-space:pre;right:1382.20px;">2</div>
<div style="position:absolute;top:633.09px;font-size:26px;line-height:26px;color:#b9b9b9;letter-spacing:0.9345703125px;font-weight:400;white-space:pre;left:815.80px;">uuid</div>
<div style="position:absolute;top:633.09px;font-size:26px;line-height:26px;color:#c8c8c8;letter-spacing:1.6881835937499545px;font-weight:400;white-space:pre;left:1717.40px;">[v]</div>
<svg style="position:absolute;left:308px;top:668px" width="28" height="28" viewBox="0 0 28 28"><g fill="none" stroke="#4a90d9" stroke-width="2"><rect x="1" y="1" width="26" height="26"/><circle cx="10" cy="10" r="2.7" stroke-width="1.9"/><path d="M5 23A5 6 0 0 1 15 23Z"/></g><g fill="#4a90d9"><rect x="16" y="8" width="8" height="2"/><rect x="16" y="12" width="8" height="2"/></g></svg>
<div style="position:absolute;top:669.09px;font-size:26px;line-height:26px;color:#b9b9b9;letter-spacing:0.65px;font-weight:400;white-space:pre;left:343.60px;">job<span style="position:relative;top:-2px">_</span>post<span style="position:relative;top:-2px">_</span>id</div>
<div style="position:absolute;top:669.09px;font-size:26px;line-height:26px;color:#b9b9b9;letter-spacing:0px;font-weight:400;white-space:pre;right:1382.20px;">3</div>
<div style="position:absolute;top:669.09px;font-size:26px;line-height:26px;color:#b9b9b9;letter-spacing:0.9345703125px;font-weight:400;white-space:pre;left:815.80px;">uuid</div>
<div style="position:absolute;top:669.09px;font-size:26px;line-height:26px;color:#c8c8c8;letter-spacing:1.6881835937499545px;font-weight:400;white-space:pre;left:1717.40px;">[v]</div>
<svg style="position:absolute;left:308px;top:704px" width="28" height="28" viewBox="0 0 28 28"><g fill="none" stroke="#4a90d9" stroke-width="2"><rect x="1" y="1" width="26" height="26"/><circle cx="10" cy="10" r="2.7" stroke-width="1.9"/><path d="M5 23A5 6 0 0 1 15 23Z"/></g><g fill="#4a90d9"><rect x="16" y="8" width="8" height="2"/><rect x="16" y="12" width="8" height="2"/></g></svg>
<div style="position:absolute;top:705.09px;font-size:26px;line-height:26px;color:#b9b9b9;letter-spacing:0.65px;font-weight:400;white-space:pre;left:341.60px;">branch<span style="position:relative;top:-2px">_</span>id</div>
<div style="position:absolute;top:705.09px;font-size:26px;line-height:26px;color:#b9b9b9;letter-spacing:0px;font-weight:400;white-space:pre;right:1382.20px;">4</div>
<div style="position:absolute;top:705.09px;font-size:26px;line-height:26px;color:#b9b9b9;letter-spacing:0.9345703125px;font-weight:400;white-space:pre;left:815.80px;">uuid</div>
<div style="position:absolute;top:705.09px;font-size:26px;line-height:26px;color:#c8c8c8;letter-spacing:1.6881835937499545px;font-weight:400;white-space:pre;left:1717.40px;">[v]</div>
<svg style="position:absolute;left:308px;top:740px" width="28" height="28" viewBox="0 0 28 28"><g fill="none" stroke="#4a90d9" stroke-width="2"><circle cx="14" cy="14" r="13"/><path d="M14 5V14L5.5 22.5"/></g></svg>
<div style="position:absolute;top:741.09px;font-size:26px;line-height:26px;color:#b9b9b9;letter-spacing:0.65px;font-weight:400;white-space:pre;left:341.60px;">application<span style="position:relative;top:-2px">_</span>date</div>
<div style="position:absolute;top:741.09px;font-size:26px;line-height:26px;color:#b9b9b9;letter-spacing:0px;font-weight:400;white-space:pre;right:1382.20px;">5</div>
<div style="position:absolute;top:741.09px;font-size:26px;line-height:26px;color:#b9b9b9;letter-spacing:0.9556445312500046px;font-weight:400;white-space:pre;left:816.80px;">timestamptz</div>
<div style="position:absolute;top:741.09px;font-size:26px;line-height:26px;color:#c8c8c8;letter-spacing:3.976367187499932px;font-weight:400;white-space:pre;left:1717.40px;">[ ]</div>
<div style="position:absolute;top:741.09px;font-size:26px;line-height:26px;color:#b9b9b9;letter-spacing:-0.7617745535714155px;font-weight:400;white-space:pre;left:1837.60px;">CURRENT<span style="position:relative;top:-2px">_</span>TIMESTA</div>
<svg style="position:absolute;left:308px;top:776px" width="28" height="28" viewBox="0 0 28 28"><g fill="none" stroke="#4a90d9" stroke-width="2"><rect x="1" y="1" width="26" height="26"/><circle cx="10" cy="10" r="2.7" stroke-width="1.9"/><path d="M5 23A5 6 0 0 1 15 23Z"/></g><g fill="#4a90d9"><rect x="16" y="8" width="8" height="2"/><rect x="16" y="12" width="8" height="2"/></g></svg>
<div style="position:absolute;top:777.09px;font-size:26px;line-height:26px;color:#b9b9b9;letter-spacing:0.65px;font-weight:400;white-space:pre;left:342.60px;">stage<span style="position:relative;top:-2px">_</span>id</div>
<div style="position:absolute;top:777.09px;font-size:26px;line-height:26px;color:#b9b9b9;letter-spacing:0px;font-weight:400;white-space:pre;right:1382.20px;">6</div>
<div style="position:absolute;top:777.09px;font-size:26px;line-height:26px;color:#b9b9b9;letter-spacing:0.9345703125px;font-weight:400;white-space:pre;left:815.80px;">uuid</div>
<div style="position:absolute;top:777.09px;font-size:26px;line-height:26px;color:#c8c8c8;letter-spacing:1.6881835937499545px;font-weight:400;white-space:pre;left:1717.40px;">[v]</div>
<svg style="position:absolute;left:308px;top:812px" width="28" height="28" viewBox="0 0 28 28"><g fill="none" stroke="#4a90d9" stroke-width="2"><rect x="1" y="1" width="26" height="26"/><circle cx="10" cy="10" r="2.7" stroke-width="1.9"/><path d="M5 23A5 6 0 0 1 15 23Z"/></g><g fill="#4a90d9"><rect x="16" y="8" width="8" height="2"/><rect x="16" y="12" width="8" height="2"/></g></svg>
<div style="position:absolute;top:813.09px;font-size:26px;line-height:26px;color:#b9b9b9;letter-spacing:0.65px;font-weight:400;white-space:pre;left:342.60px;">status<span style="position:relative;top:-2px">_</span>id</div>
<div style="position:absolute;top:813.09px;font-size:26px;line-height:26px;color:#b9b9b9;letter-spacing:0px;font-weight:400;white-space:pre;right:1382.20px;">7</div>
<div style="position:absolute;top:813.09px;font-size:26px;line-height:26px;color:#b9b9b9;letter-spacing:0.9345703125px;font-weight:400;white-space:pre;left:815.80px;">uuid</div>
<div style="position:absolute;top:813.09px;font-size:26px;line-height:26px;color:#c8c8c8;letter-spacing:1.6881835937499545px;font-weight:400;white-space:pre;left:1717.40px;">[v]</div>
<svg style="position:absolute;left:308px;top:848px" width="28" height="28" viewBox="0 0 28 28"><g fill="none" stroke="#4a90d9" stroke-width="2"><rect x="1" y="1" width="26" height="26"/><circle cx="10" cy="10" r="2.7" stroke-width="1.9"/><path d="M5 23A5 6 0 0 1 15 23Z"/></g><g fill="#4a90d9"><rect x="16" y="8" width="8" height="2"/><rect x="16" y="12" width="8" height="2"/></g></svg>
<div style="position:absolute;top:849.09px;font-size:26px;line-height:26px;color:#b9b9b9;letter-spacing:0.65px;font-weight:400;white-space:pre;left:341.60px;">reject<span style="position:relative;top:-2px">_</span>reason<span style="position:relative;top:-2px">_</span>id</div>
<div style="position:absolute;top:849.09px;font-size:26px;line-height:26px;color:#b9b9b9;letter-spacing:0px;font-weight:400;white-space:pre;right:1382.20px;">8</div>
<div style="position:absolute;top:849.09px;font-size:26px;line-height:26px;color:#b9b9b9;letter-spacing:0.9345703125px;font-weight:400;white-space:pre;left:815.80px;">uuid</div>
<div style="position:absolute;top:849.09px;font-size:26px;line-height:26px;color:#c8c8c8;letter-spacing:3.976367187499932px;font-weight:400;white-space:pre;left:1717.40px;">[ ]</div>
<svg style="position:absolute;left:308px;top:884px" width="28" height="28" viewBox="0 0 28 28"><g fill="none" stroke="#4a90d9" stroke-width="2"><rect x="1" y="1" width="26" height="26"/><circle cx="10" cy="10" r="2.7" stroke-width="1.9"/><path d="M5 23A5 6 0 0 1 15 23Z"/></g><g fill="#4a90d9"><rect x="16" y="8" width="8" height="2"/><rect x="16" y="12" width="8" height="2"/></g></svg>
<div style="position:absolute;top:885.09px;font-size:26px;line-height:26px;color:#b9b9b9;letter-spacing:0.65px;font-weight:400;white-space:pre;left:341.60px;">application<span style="position:relative;top:-2px">_</span>source<span style="position:relative;top:-2px">_</span>id</div>
<div style="position:absolute;top:885.09px;font-size:26px;line-height:26px;color:#b9b9b9;letter-spacing:0px;font-weight:400;white-space:pre;right:1382.20px;">9</div>
<div style="position:absolute;top:885.09px;font-size:26px;line-height:26px;color:#b9b9b9;letter-spacing:0.9345703125px;font-weight:400;white-space:pre;left:815.80px;">uuid</div>
<div style="position:absolute;top:885.09px;font-size:26px;line-height:26px;color:#c8c8c8;letter-spacing:3.976367187499932px;font-weight:400;white-space:pre;left:1717.40px;">[ ]</div>
<svg style="position:absolute;left:308px;top:920px" width="28" height="28" viewBox="0 0 28 28"><g fill="none" stroke="#4a90d9" stroke-width="2"><rect x="1" y="1" width="26" height="26"/><circle cx="10" cy="10" r="2.7" stroke-width="1.9"/><path d="M5 23A5 6 0 0 1 15 23Z"/></g><g fill="#4a90d9"><rect x="16" y="8" width="8" height="2"/><rect x="16" y="12" width="8" height="2"/></g></svg>
<div style="position:absolute;top:921.09px;font-size:26px;line-height:26px;color:#b9b9b9;letter-spacing:0.65px;font-weight:400;white-space:pre;left:341.60px;">created<span style="position:relative;top:-2px">_</span>by<span style="position:relative;top:-2px">_</span>id</div>
<div style="position:absolute;top:921.09px;font-size:26px;line-height:26px;color:#b9b9b9;letter-spacing:0px;font-weight:400;white-space:pre;right:1382.20px;">12</div>
<div style="position:absolute;top:921.09px;font-size:26px;line-height:26px;color:#b9b9b9;letter-spacing:0.9345703125px;font-weight:400;white-space:pre;left:815.80px;">uuid</div>
<div style="position:absolute;top:921.09px;font-size:26px;line-height:26px;color:#c8c8c8;letter-spacing:1.6881835937499545px;font-weight:400;white-space:pre;left:1717.40px;">[v]</div>
<svg style="position:absolute;left:307px;top:961px" width="30" height="18" viewBox="0 0 30 18"><g fill="none" stroke="#4a90d9" stroke-width="2"><path d="M1.6 17.2L8 1.6L14.4 17.2M4.2 11.8H11.8"/><path d="M19.2 2H28.6L19.6 16H29.2"/></g><rect x="15.2" y="8" width="3.8" height="1.9" fill="#4a90d9"/></svg>
<div style="position:absolute;top:957.09px;font-size:26px;line-height:26px;color:#b9b9b9;letter-spacing:0.65px;font-weight:400;white-space:pre;left:341.60px;">created<span style="position:relative;top:-2px">_</span>by<span style="position:relative;top:-2px">_</span>name</div>
<div style="position:absolute;top:957.09px;font-size:26px;line-height:26px;color:#b9b9b9;letter-spacing:0px;font-weight:400;white-space:pre;right:1382.20px;">13</div>
<div style="position:absolute;top:957.09px;font-size:26px;line-height:26px;color:#b9b9b9;letter-spacing:0.7605113636363657px;font-weight:400;white-space:pre;left:816.40px;">varchar(200)</div>
<div style="position:absolute;top:955.89px;font-size:26px;line-height:26px;color:#80c4f4;letter-spacing:0.8933593750000076px;font-weight:400;white-space:pre;left:1437.00px;">default</div>
<div style="position:absolute;left:1438px;top:979.5px;width:83.5px;height:1.6px;background:#80c4f4"></div>
<div style="position:absolute;top:957.09px;font-size:26px;line-height:26px;color:#c8c8c8;letter-spacing:1.6881835937499545px;font-weight:400;white-space:pre;left:1717.40px;">[v]</div>
<svg style="position:absolute;left:308px;top:992px" width="28" height="28" viewBox="0 0 28 28"><g fill="none" stroke="#4a90d9" stroke-width="2"><circle cx="14" cy="14" r="13"/><path d="M14 5V14L5.5 22.5"/></g></svg>
<div style="position:absolute;top:993.09px;font-size:26px;line-height:26px;color:#b9b9b9;letter-spacing:0.65px;font-weight:400;white-space:pre;left:341.60px;">created<span style="position:relative;top:-2px">_</span>date</div>
<div style="position:absolute;top:993.09px;font-size:26px;line-height:26px;color:#b9b9b9;letter-spacing:0px;font-weight:400;white-space:pre;right:1382.20px;">14</div>
<div style="position:absolute;top:993.09px;font-size:26px;line-height:26px;color:#b9b9b9;letter-spacing:0.9556445312500046px;font-weight:400;white-space:pre;left:816.80px;">timestamptz</div>
<div style="position:absolute;top:993.09px;font-size:26px;line-height:26px;color:#c8c8c8;letter-spacing:1.6881835937499545px;font-weight:400;white-space:pre;left:1717.40px;">[v]</div>
<svg style="position:absolute;left:308px;top:1028px" width="28" height="28" viewBox="0 0 28 28"><g fill="none" stroke="#4a90d9" stroke-width="2"><rect x="1" y="1" width="26" height="26"/><circle cx="10" cy="10" r="2.7" stroke-width="1.9"/><path d="M5 23A5 6 0 0 1 15 23Z"/></g><g fill="#4a90d9"><rect x="16" y="8" width="8" height="2"/><rect x="16" y="12" width="8" height="2"/></g></svg>
<div style="position:absolute;top:1029.09px;font-size:26px;line-height:26px;color:#b9b9b9;letter-spacing:0.65px;font-weight:400;white-space:pre;left:341.60px;">updated<span style="position:relative;top:-2px">_</span>by<span style="position:relative;top:-2px">_</span>id</div>
<div style="position:absolute;top:1029.09px;font-size:26px;line-height:26px;color:#b9b9b9;letter-spacing:0px;font-weight:400;white-space:pre;right:1382.20px;">15</div>
<div style="position:absolute;top:1029.09px;font-size:26px;line-height:26px;color:#b9b9b9;letter-spacing:0.9345703125px;font-weight:400;white-space:pre;left:815.80px;">uuid</div>
<div style="position:absolute;top:1029.09px;font-size:26px;line-height:26px;color:#c8c8c8;letter-spacing:3.976367187499932px;font-weight:400;white-space:pre;left:1717.40px;">[ ]</div>
<svg style="position:absolute;left:307px;top:1069px" width="30" height="18" viewBox="0 0 30 18"><g fill="none" stroke="#4a90d9" stroke-width="2"><path d="M1.6 17.2L8 1.6L14.4 17.2M4.2 11.8H11.8"/><path d="M19.2 2H28.6L19.6 16H29.2"/></g><rect x="15.2" y="8" width="3.8" height="1.9" fill="#4a90d9"/></svg>
<div style="position:absolute;top:1065.09px;font-size:26px;line-height:26px;color:#b9b9b9;letter-spacing:0.65px;font-weight:400;white-space:pre;left:341.60px;">updated<span style="position:relative;top:-2px">_</span>by<span style="position:relative;top:-2px">_</span>name</div>
<div style="position:absolute;top:1065.09px;font-size:26px;line-height:26px;color:#b9b9b9;letter-spacing:0px;font-weight:400;white-space:pre;right:1382.20px;">16</div>
<div style="position:absolute;top:1065.09px;font-size:26px;line-height:26px;color:#b9b9b9;letter-spacing:0.7605113636363657px;font-weight:400;white-space:pre;left:816.40px;">varchar(200)</div>
<div style="position:absolute;top:1063.89px;font-size:26px;line-height:26px;color:#80c4f4;letter-spacing:0.8933593750000076px;font-weight:400;white-space:pre;left:1437.00px;">default</div>
<div style="position:absolute;left:1438px;top:1087.5px;width:83.5px;height:1.6px;background:#80c4f4"></div>
<div style="position:absolute;top:1065.09px;font-size:26px;line-height:26px;color:#c8c8c8;letter-spacing:3.976367187499932px;font-weight:400;white-space:pre;left:1717.40px;">[ ]</div>
<svg style="position:absolute;left:308px;top:1100px" width="28" height="28" viewBox="0 0 28 28"><g fill="none" stroke="#4a90d9" stroke-width="2"><circle cx="14" cy="14" r="13"/><path d="M14 5V14L5.5 22.5"/></g></svg>
<div style="position:absolute;top:1101.09px;font-size:26px;line-height:26px;color:#b9b9b9;letter-spacing:0.65px;font-weight:400;white-space:pre;left:341.60px;">updated<span style="position:relative;top:-2px">_</span>date</div>
<div style="position:absolute;top:1101.09px;font-size:26px;line-height:26px;color:#b9b9b9;letter-spacing:0px;font-weight:400;white-space:pre;right:1382.20px;">17</div>
<div style="position:absolute;top:1101.09px;font-size:26px;line-height:26px;color:#b9b9b9;letter-spacing:0.9556445312500046px;font-weight:400;white-space:pre;left:816.80px;">timestamptz</div>
<div style="position:absolute;top:1101.09px;font-size:26px;line-height:26px;color:#c8c8c8;letter-spacing:3.976367187499932px;font-weight:400;white-space:pre;left:1717.40px;">[ ]</div>
<div style="position:absolute;left:295px;top:981px;width:1630px;height:46px;border:4px solid #e8412a;border-radius:23px;box-sizing:border-box"></div>
<div style="position:absolute;left:295px;top:1091px;width:1630px;height:46px;border:4px solid #e8412a;border-radius:23px;box-sizing:border-box"></div></div>
</body></html>
